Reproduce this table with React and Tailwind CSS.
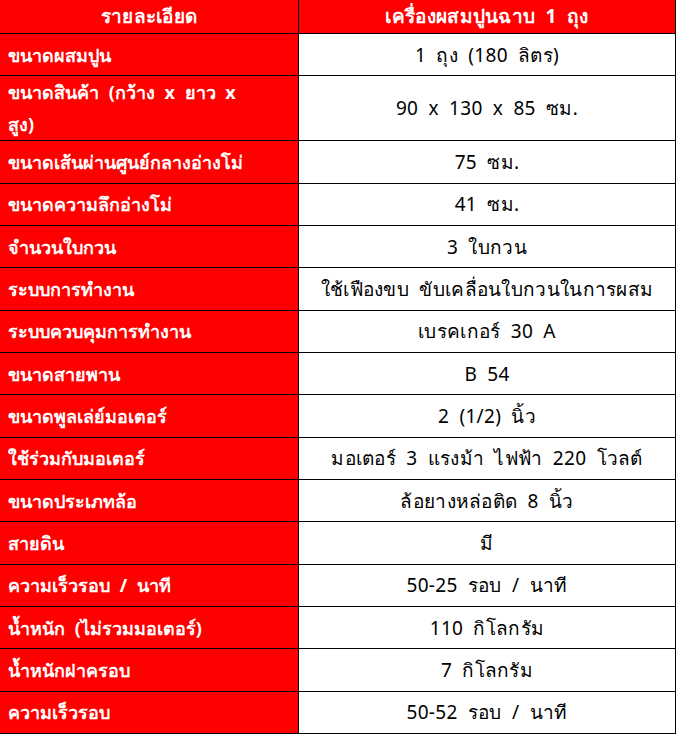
import React from 'react';

const rows = [
  ['ขนาดผสมปูน', '1 ถุง (180 ลิตร)'],
  [['ขนาดสินค้า (กว้าง x ยาว x', 'สูง)'], '90 x 130 x 85 ซม.'],
  ['ขนาดเส้นผ่านศูนย์กลางอ่างโม่', '75 ซม.'],
  ['ขนาดความลึกอ่างโม่', '41 ซม.'],
  ['จำนวนใบกวน', '3 ใบกวน'],
  ['ระบบการทำงาน', 'ใช้เฟืองขบ ขับเคลื่อนใบกวนในการผสม'],
  ['ระบบควบคุมการทำงาน', 'เบรคเกอร์ 30 A'],
  ['ขนาดสายพาน', 'B 54'],
  ['ขนาดพูลเล่ย์มอเตอร์', '2 (1/2) นิ้ว'],
  ['ใช้ร่วมกับมอเตอร์', 'มอเตอร์ 3 แรงม้า ไฟฟ้า 220 โวลต์'],
  ['ขนาดประเภทล้อ', 'ล้อยางหล่อติด 8 นิ้ว'],
  ['สายดิน', 'มี'],
  ['ความเร็วรอบ / นาที', '50-25 รอบ / นาที'],
  ['น้ำหนัก (ไม่รวมมอเตอร์)', '110 กิโลกรัม'],
  ['น้ำหนักฝาครอบ', '7 กิโลกรัม'],
  ['ความเร็วรอบ', '50-52 รอบ / นาที'],
];

export default function App() {
  return (
    <div
      className="w-[676px] bg-white text-[18px] [word-spacing:5px]"
      style={{ fontFamily: '"Noto Sans", "DejaVu Sans", sans-serif' }}
    >
      <div className="w-[676px] border-r border-b border-black">
        {/* header */}
        <div className="flex border-b border-black bg-[#ff0000] text-white font-bold text-[19px] tracking-[0.3px]">
          <div className="w-[299px] h-[33px] flex items-center justify-center border-r border-black">
            รายละเอียด
          </div>
          <div className="flex-1 h-[33px] flex items-center justify-center">
            เครื่องผสมปูนฉาบ 1 ถุง
          </div>
        </div>

        {rows.map(([label, value], i) => (
          <div
            key={i}
            className={`flex ${i === rows.length - 1 ? '' : 'border-b border-black'}`}
          >
            <div className="w-[299px] min-h-[41.33px] flex items-center pl-[8px] pr-2 bg-[#ff0000] text-white font-bold leading-[32px] border-r border-black">
              {Array.isArray(label) ? (
                <span>
                  {label[0]}
                  <br />
                  {label[1]}
                </span>
              ) : (
                label
              )}
            </div>
            <div className="flex-1 min-h-[41.33px] flex items-center justify-center text-black text-[19px] tracking-[0.3px] leading-[32px]">
              {value}
            </div>
          </div>
        ))}
      </div>
    </div>
  );
}
